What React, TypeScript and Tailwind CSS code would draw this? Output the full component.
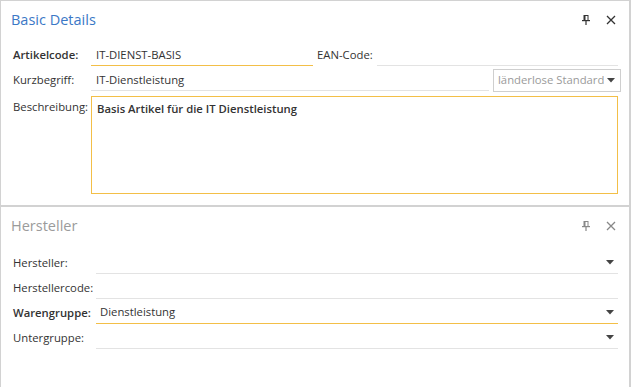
import React from 'react';

function PinIcon({ color }: { color: string }) {
  return (
    <svg width="8" height="10" viewBox="0 0 8 10" className={color}>
      <rect x="2" y="0.5" width="4" height="5" fill="none" stroke="currentColor" strokeWidth="1" />
      <rect x="2" y="0.5" width="1.5" height="5" fill="currentColor" />
      <rect x="0" y="5" width="8" height="1.2" fill="currentColor" />
      <rect x="3.4" y="6" width="1.2" height="4" fill="currentColor" />
    </svg>
  );
}

function CloseIcon({ color }: { color: string }) {
  return (
    <svg width="10" height="10" viewBox="0 0 10 10" className={color}>
      <path d="M1 1 L9 9 M9 1 L1 9" stroke="currentColor" strokeWidth="1.3" />
    </svg>
  );
}

function Caret() {
  return (
    <svg width="8" height="5" viewBox="0 0 8 5" className="text-[#444] shrink-0">
      <path d="M0 0 H8 L4 4.5 Z" fill="currentColor" />
    </svg>
  );
}

function Header({ title, active }: { title: string; active?: boolean }) {
  return (
    <div className="flex items-center h-[36px] pl-[10px] pr-[13px] pt-[1px]">
      <div className={`flex-1 text-[14.5px] leading-[20px] ${active ? 'text-[#3b78c6]' : 'text-[#9b9b9b]'}`}>{title}</div>
      <div className="flex items-center gap-[16px]">
        <PinIcon color={active ? 'text-[#333]' : 'text-[#888]'} />
        <CloseIcon color={active ? 'text-[#333]' : 'text-[#888]'} />
      </div>
    </div>
  );
}

function Row({ label, bold, value, focused, caret }: { label: string; bold?: boolean; value?: string; focused?: boolean; caret?: boolean }) {
  return (
    <div className="flex h-[22px]">
      <div className={`w-[83px] shrink-0 leading-[22px] ${bold ? 'font-semibold' : ''}`}>{label}</div>
      <div className={`flex-1 flex items-center pl-[4px] pr-[4px] border-b ${focused ? 'border-[#f3bf47]' : 'border-[#e3e3e3]'}`}>
        <div className="flex-1">{value}</div>
        {caret && <Caret />}
      </div>
    </div>
  );
}

export default function App() {
  return (
    <div
      className="w-[631px] h-[387px] bg-white border-l border-t border-r-2 border-[#d2d2d2] text-[11.3px] text-[#333] overflow-hidden"
      style={{ fontFamily: '"Open Sans", "Noto Sans", sans-serif' }}
    >
      <div className="h-[206px] border-b-2 border-[#d2d2d2]">
        <Header title="Basic Details" active />
        <div className="pl-[12px] pr-[11px] pt-[7px] flex flex-col">
          <div className="flex h-[22px]">
            <div className="w-[78px] shrink-0 leading-[22px] font-semibold">Artikelcode:</div>
            <div className="w-[222px] shrink-0 pl-[5px] leading-[22px] border-b border-[#f3bf47]">IT-DIENST-BASIS</div>
            <div className="w-[64px] shrink-0 pl-[4px] leading-[22px]">EAN-Code:</div>
            <div className="flex-1 border-b border-[#e3e3e3]"></div>
          </div>
          <div className="flex mt-[3px] h-[24px] items-start">
            <div className="w-[78px] shrink-0 leading-[22px]">Kurzbegriff:</div>
            <div className="w-[398px] shrink-0 pl-[5px] h-[22px] leading-[22px] border-b border-[#e3e3e3]">IT-Dienstleistung</div>
            <div className="ml-[4px] flex-1 h-[23px] border border-[#cfcfcf] flex items-center pl-[4px] pr-[5px] gap-[3px]">
              <div className="flex-1 overflow-hidden whitespace-nowrap text-[#9a9a9a]">länderlose Standard</div>
              <Caret />
            </div>
          </div>
          <div className="flex mt-[3px]">
            <div className="w-[78px] shrink-0 pt-[2px] leading-[18px]">Beschreibung:</div>
            <div className="flex-1 h-[98px] border border-[#f3bf47] pl-[5px] pt-[3px] font-semibold leading-[18px]">
              Basis Artikel für die IT Dienstleistung
            </div>
          </div>
        </div>
      </div>
      <div>
        <Header title="Hersteller" />
        <div className="pl-[12px] pr-[11px] pt-[9px] flex flex-col gap-[3px]">
          <Row label="Hersteller:" caret />
          <Row label="Herstellercode:" />
          <Row label="Warengruppe:" bold value="Dienstleistung" focused caret />
          <Row label="Untergruppe:" caret />
        </div>
      </div>
    </div>
  );
}
